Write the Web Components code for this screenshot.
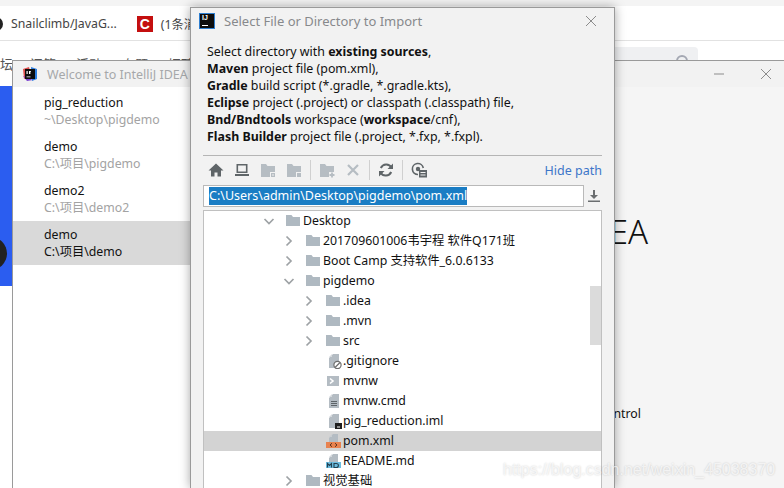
<!DOCTYPE html>
<html>
<head>
<meta charset="utf-8">
<title>Select File or Directory to Import</title>
<style>
  html, body { margin: 0; height: 100%; overflow: hidden; background: #fff; }
  body { font-family: "Noto Sans", "Noto Sans CJK SC", sans-serif; }
</style>
</head>
<body>
<ij-desktop>
  <browser-back slot="back"></browser-back>
  <welcome-window slot="welcome"></welcome-window>
  <import-dialog slot="front">
    <tree-row depth="0" kind="folder" open>Desktop</tree-row>
    <tree-row depth="1" kind="folder" closed>201709601006韦宇程 软件Q171班</tree-row>
    <tree-row depth="1" kind="folder" closed>Boot Camp 支持软件_6.0.6133</tree-row>
    <tree-row depth="1" kind="folder" open>pigdemo</tree-row>
    <tree-row depth="2" kind="folder" closed>.idea</tree-row>
    <tree-row depth="2" kind="folder" closed>.mvn</tree-row>
    <tree-row depth="2" kind="folder" closed>src</tree-row>
    <tree-row depth="2" kind="ignore">.gitignore</tree-row>
    <tree-row depth="2" kind="shell">mvnw</tree-row>
    <tree-row depth="2" kind="text">mvnw.cmd</tree-row>
    <tree-row depth="2" kind="iml">pig_reduction.iml</tree-row>
    <tree-row depth="2" kind="xml" selected>pom.xml</tree-row>
    <tree-row depth="2" kind="md">README.md</tree-row>
    <tree-row depth="1" kind="folder" closed>视觉基础</tree-row>
  </import-dialog>
  <span slot="mark">https://blog.csdn.net/weixin_45038370</span>
</ij-desktop>

<script>
const FONT = '"Noto Sans", "Noto Sans CJK SC", sans-serif'

const FOLDER = '<path fill="#afb9c1" d="M0 2h5.500L7 4h7v9H0z"/>'
const PAGE = '<path fill="#b4bcc3" d="M7 1h6v14H3V5z"/><path fill="#d5d9dd" d="M3 4l3-3v3z"/>'

const FILE_ICONS = {
  folder: FOLDER,
  ignore: PAGE + '<circle cx="11.5" cy="12" r="3.600" fill="#fff" stroke="#6e6e6e" stroke-width="1.200"/><path stroke="#6e6e6e" stroke-width="1.200" d="M9 14.500l5-5"/>',
  shell: '<path fill="#b4bcc3" d="M1 3h12v10H1z"/><path fill="none" stroke="#fff" stroke-width="1.600" d="M4 5.500L7 8l-3 2.500"/>',
  text: PAGE + '<path stroke="#5f6569" stroke-width="1" d="M5 8.500h6M5 10.500h6M5 12.500h6"/>',
  iml: PAGE + '<path fill="#1f1f1f" d="M9 10h7v6H9z"/><path fill="#fff" d="M11 13.500h3v1h-3z"/>',
  xml: '<path fill="#b4bcc3" d="M7 1h5v8H3V5z"/><path fill="#c9ced2" d="M3 4l3-3v3z"/><path fill="#e8824f" d="M0 9h15v6H0z"/><path fill="none" stroke="#5a3520" stroke-width="1" d="M6 10.200L4 12l2 1.800M9 10.200l2 1.800-2 1.800"/>',
  md: '<path fill="#b4bcc3" d="M7 1h5v8H3V5z"/><path fill="#d5d9dd" d="M3 4l3-3v3z"/><path fill="#6cbde0" d="M0 9h15v6H0z"/><path fill="none" stroke="#24404f" stroke-width="1.100" d="M1.500 14.500v-4l2 2 2-2v4M8 10.500v4h2.200q2.200 0 2.200-2t-2.200-2z"/>'
}

/* one line of the file chooser tree */
class TreeRow extends HTMLElement {
  constructor () {
    super()
    const root = this.attachShadow({ mode: 'open' })
    const depth = Number(this.getAttribute('depth') || 0)
    const kind = this.getAttribute('kind') || 'text'
    let arrow = ''
    if (this.hasAttribute('open')) arrow = '<path d="M1.500 4l4.500 4.500L10.500 4"/>'
    if (this.hasAttribute('closed')) arrow = '<path d="M3.500 1.500L8 6l-4.500 4.500"/>'
    root.innerHTML = `
      <style>
        :host {
          display: flex;
          align-items: center;
          box-sizing: border-box;
          height: 20px;
          padding: 0 0 0 ${59 + depth * 20}px;
          white-space: nowrap;
          font-size: 12.3px;
          color: #111;
        }
        :host([selected]) { background: #d3d3d3; }
        .arrow { width: 12px; height: 12px; margin-right: 11px; flex: none; }
        .arrow path { fill: none; stroke: #9ea2a5; stroke-width: 1.7; }
        .icon { width: 16px; height: 16px; margin-right: 1px; flex: none; }
        .txt { position: relative; top: -1px; }
      </style>
      <svg class="arrow" viewBox="0 0 12 12">${arrow}</svg>
      <svg class="icon" viewBox="0 0 16 16">${FILE_ICONS[kind]}</svg>
      <span class="txt"><slot></slot></span>`
  }
}

/* icon button of the chooser toolbar */
class ToolIcon extends HTMLElement {
  constructor () {
    super()
    const root = this.attachShadow({ mode: 'open' })
    root.innerHTML = `
      <style>
        :host { display: flex; width: 26px; height: 22px; align-items: center; justify-content: center; }
        svg { width: 16px; height: 16px; }
      </style>
      <svg viewBox="0 0 16 16"></svg>`
    root.querySelector('svg').innerHTML = this.getAttribute('data-path')
  }
}

const DIALOG = document.createElement('template')
DIALOG.innerHTML = `
  <style>
    :host {
      display: flex;
      flex-direction: column;
      box-sizing: border-box;
      width: 425px;
      height: 100%;
      background: #f2f2f2;
      border: 1px solid #9a9a9a;
      border-bottom: 0;
      box-shadow: 0 0 10px rgba(0, 0, 0, .35);
      font-size: 12.4px;
      color: #111;
    }
    .title {
      display: flex;
      align-items: center;
      height: 25px;
      flex: none;
      padding: 0 17px 0 8px;
      color: #87898c;
      font-size: 13px;
    }
    .logo {
      display: flex;
      width: 16px;
      height: 16px;
      margin-right: 9px;
      background: #0d0d0d;
      box-shadow: 0 0 0 1px #2f7fd0 inset;
      color: #fff;
      font: bold 7px/9px "Liberation Sans", sans-serif;
      padding-left: 3px;
      box-sizing: border-box;
      position: relative;
    }
    .logo::after {
      content: "";
      position: absolute;
      left: 3px;
      bottom: 3px;
      width: 6px;
      height: 1px;
      background: #fff;
    }
    .title span.txt { flex: 1; }
    .desc { margin: 10px 0 0; padding: 0 12px 0 16px; line-height: 17px; flex: none; }
    .desc div { white-space: nowrap; }
    .rule { height: 1px; background: #b5b5b5; margin: 10px 12px 0 12px; flex: none; }
    .tools { display: flex; align-items: center; height: 28px; margin: 0 12px; flex: none; }
    .sep { width: 1px; height: 20px; margin: 0 3px; background: #d0d0d0; flex: none; }
    .spring { flex: 1; }
    a { color: #3d76c9; font-size: 12.5px; text-decoration: none; }
    .pathline { display: flex; align-items: center; height: 22px; margin: 1px 12px 0 12px; flex: none; }
    .field {
      flex: 1;
      box-sizing: border-box;
      height: 22px;
      padding: 1px 0 0 5px;
      background: #fff;
      border: 1px solid #b9b9b9;
      white-space: nowrap;
      line-height: 18px;
      font-size: 12.5px;
    }
    .field span { background: #1a7dc4; color: #fff; display: inline-block; height: 18px; }
    .dl { width: 16px; height: 16px; margin-left: 2px; flex: none; }
    .tree {
      position: relative;
      flex: 1;
      margin: 3px 12px 0 12px;
      background: #fff;
      border: 1px solid #c0c0c0;
      border-bottom: 0;
      overflow: hidden;
    }
    .thumb {
      position: absolute;
      right: 0;
      top: 75px;
      width: 11px;
      height: 59px;
      background: #dbdbdb;
    }
  </style>
  <div class="title">
    <span class="logo">IJ</span><span class="txt">Select File or Directory to Import</span>
    <svg width="12" height="12" viewBox="0 0 12 12"><path d="M1 1l10 10M11 1L1 11" stroke="#8c8c8c" fill="none"/></svg>
  </div>
  <div class="desc">
    <div>Select directory with <b>existing sources</b>,</div>
    <div><b>Maven</b> project file (pom.xml),</div>
    <div><b>Gradle</b> build script (*.gradle, *.gradle.kts),</div>
    <div><b>Eclipse</b> project (.project) or classpath (.classpath) file,</div>
    <div><b>Bnd/Bndtools</b> workspace (<b>workspace</b>/cnf),</div>
    <div><b>Flash Builder</b> project file (.project, *.fxp, *.fxpl).</div>
  </div>
  <div class="rule"></div>
  <div class="tools">
    <tool-icon data-path='<path fill="#5f6568" d="M8 1.500L15.500 8.500H13v6H9.500v-4h-3v4H3v-6H.500z"/>'></tool-icon>
    <tool-icon data-path='<path fill="none" stroke="#5f6568" stroke-width="1.600" d="M3.300 2.800h9.400v7.400H3.300z"/><path fill="#5f6568" d="M1 12h14v2H1z"/>'></tool-icon>
    <tool-icon data-path='<path fill="#b6bdc3" d="M1 2h5l1.500 2H15v6H10v5H1z"/><path fill="#b6bdc3" d="M11 11h4v4h-4z"/><path fill="#f2f2f2" d="M12 12.500h2v1h-2z"/>'></tool-icon>
    <tool-icon data-path='<path fill="#b6bdc3" d="M1 2h5l1.500 2H15v6H10v5H1z"/><path fill="#b6bdc3" d="M11 11h4v4h-4z"/>'></tool-icon>
    <span class="sep"></span>
    <tool-icon data-path='<path fill="#b6bdc3" d="M1 2h5l1.500 2H15v6h-5v5H1z"/><path stroke="#b6bdc3" stroke-width="1.800" d="M13 10.500v5M10.500 13h5"/>'></tool-icon>
    <tool-icon data-path='<path stroke="#b6bdc3" stroke-width="2.200" d="M3 3l10 10M13 3L3 13"/>'></tool-icon>
    <span class="sep"></span>
    <tool-icon data-path='<path fill="none" stroke="#5f6568" stroke-width="2" d="M13.500 5.500A6 6 0 0 0 2.800 6M2.500 10.500A6 6 0 0 0 13.200 10"/><path fill="#5f6568" d="M15 1.500V7h-5.500zM1 14.500V9h5.500z"/>'></tool-icon>
    <span class="sep"></span>
    <tool-icon data-path='<path fill="none" stroke="#5f6568" stroke-width="1.600" d="M7 12.500A5.500 5.500 0 1 1 12.300 6"/><circle cx="7" cy="7" r="2.200" fill="#5f6568"/><path fill="#5f6568" d="M8 8h8v7.500H8z"/><path stroke="#f2f2f2" d="M9.500 10.500h5M9.500 13h5"/>'></tool-icon>
    <span class="spring"></span>
    <a href="#">Hide path</a>
  </div>
  <div class="pathline">
    <div class="field"><span>C:\\Users\\admin\\Desktop\\pigdemo\\pom.xml</span></div>
    <svg class="dl" viewBox="0 0 16 16"><path fill="#6b6e70" d="M7 2h2v5h3L8 11 4 7h3zM2 12.500h12V14H2z"/></svg>
  </div>
  <div class="tree"><slot></slot><div class="thumb"></div></div>
`

class ImportDialog extends HTMLElement {
  constructor () {
    super()
    this.attachShadow({ mode: 'open' }).appendChild(DIALOG.content.cloneNode(true))
  }
}

/* one recent project on the welcome screen */
class RecentItem extends HTMLElement {
  constructor () {
    super()
    const root = this.attachShadow({ mode: 'open' })
    root.innerHTML = `
      <style>
        :host {
          display: block;
          height: 44px;
          box-sizing: border-box;
          padding: 5px 0 0 31px;
          font-size: 12.3px;
          line-height: 17px;
          color: #111;
          white-space: nowrap;
        }
        :host([active]) { background: #d9d9d9; }
        .path { color: #a3a3a3; }
        :host([active]) .path { color: #111; }
      </style>
      <div>${this.getAttribute('name')}</div>
      <div class="path">${this.getAttribute('path')}</div>`
  }
}

const WELCOME = document.createElement('template')
WELCOME.innerHTML = `
  <style>
    :host {
      display: flex;
      flex-direction: column;
      box-sizing: border-box;
      width: 772px;
      height: 100%;
      background: #f5f5f5;
      border: 1px solid #9a9a9a;
      border-right: 0;
      border-bottom: 0;
      font-family: ${FONT};
    }
    .bar {
      display: flex;
      align-items: center;
      flex: none;
      height: 26px;
      background: #f2f2f2;
      padding-left: 9px;
      font-size: 12.5px;
      color: #a6a8aa;
      white-space: nowrap;
    }
    .bar svg.mark { margin-right: 9px; }
    .spring { flex: 1; }
    .ctl { margin-right: 12px; }
    .ctl.min { margin-right: 35px; }
    .body { display: flex; flex: 1; min-height: 0; }
    .list { width: 177px; background: #fff; flex: none; padding-top: 2px; }
    .right { flex: 1; padding: 125px 0 0 0; font-size: 12.3px; color: #111; white-space: nowrap; text-align: right; overflow: hidden; }
    .big { font-size: 33px; line-height: 40px; font-weight: 300; margin-right: 136px; }
    .act { margin-top: 153px; margin-right: 143px; }
  </style>
  <div class="bar">
    <svg class="mark" width="16" height="16" viewBox="0 0 16 16">
      <path fill="#e2504f" d="M1 3l6-2 2 8-7 4z"/>
      <path fill="#7a3fd0" d="M1 10l4 5 6-1z"/>
      <path fill="#2f7fe0" d="M9 1l6 2v10l-5 2z"/>
      <path fill="#0d0d0d" d="M3 3h10v10H3z"/>
      <path fill="#fff" d="M4.500 5h1.200v3H4.500zM7 5h2v.8H8.400V8H7zM4.500 10.500h4v.8h-4z"/>
    </svg>
    Welcome to IntelliJ IDEA
    <span class="spring"></span>
    <svg class="ctl min" width="12" height="12" viewBox="0 0 12 12"><path d="M1 6h10" stroke="#8c8c8c"/></svg>
    <svg class="ctl" width="12" height="12" viewBox="0 0 12 12"><path d="M1 1l10 10M11 1L1 11" stroke="#8c8c8c"/></svg>
  </div>
  <div class="body">
    <div class="list">
      <recent-item name="pig_reduction" path="~\\Desktop\\pigdemo"></recent-item>
      <recent-item name="demo" path="C:\\项目\\pigdemo"></recent-item>
      <recent-item name="demo2" path="C:\\项目\\demo2"></recent-item>
      <recent-item name="demo" path="C:\\项目\\demo" active></recent-item>
    </div>
    <div class="right">
      <div class="big">IntelliJ IDEA</div>
      <div class="act">Check out from Version Control</div>
    </div>
  </div>
`

class WelcomeWindow extends HTMLElement {
  constructor () {
    super()
    this.attachShadow({ mode: 'open' }).appendChild(WELCOME.content.cloneNode(true))
  }
}

/* the browser page that shows behind both IDE windows */
class BrowserBack extends HTMLElement {
  constructor () {
    super()
    const root = this.attachShadow({ mode: 'open' })
    root.innerHTML = `
      <style>
        :host { display: block; height: 100%; background: #fff; overflow: hidden; font-family: ${FONT}; }
        .top { height: 6px; background: #f4f4f4; }
        .tabs {
          display: flex;
          align-items: center;
          height: 34px;
          box-sizing: border-box;
          border-bottom: 1px solid #e2e2e2;
          font-size: 12.3px;
          color: #444;
          white-space: nowrap;
          margin-top: 1px;
        }
        .dot { width: 14px; height: 14px; margin-left: -11px; margin-right: 8px; background: #222; border-radius: 50%; }
        .c {
          display: flex; align-items: center; justify-content: center;
          width: 16px; height: 16px; margin: 0 8px 0 20px;
          background: #c40f0f; color: #fff; font: bold 14px/16px "Liberation Sans", sans-serif;
        }
        .menu { display: flex; height: 30px; padding-top: 13px; box-sizing: border-box; gap: 20px; font-size: 13px; color: #555; white-space: nowrap; }
        .menu span:first-child { margin-right: -3px; }
        .side { width: 12px; height: 200px; margin-top: 15px; background: #2b5df0; position: relative; overflow: hidden; }
        .side::after { content: ""; position: absolute; left: -26px; top: 151px; width: 33px; height: 33px; border-radius: 50%; background: #222; }
        .search { position: absolute; left: 590px; top: 47px; width: 108px; height: 30px; background: #eff0f2; border-radius: 4px; }
        .search::after { content: ""; position: absolute; right: 10px; top: 8px; width: 8px; height: 8px; border: 2px solid #a4a8b3; border-radius: 50%; }
      </style>
      <div class="top"></div>
      <div class="tabs"><span class="dot"></span>Snailclimb/JavaG...<span class="c">C</span>(1条消息)</div>
      <div class="menu"><span>坛</span><span>问答</span><span>活动</span><span>专题</span><span>招聘</span></div>
      <div class="side"></div>
      <div class="search"></div>`
  }
}

const DESKTOP = document.createElement('template')
DESKTOP.innerHTML = `
  <style>
    :host {
      display: block;
      position: relative;
      width: 784px;
      height: 488px;
      overflow: hidden;
      font-family: ${FONT};
    }
    .browser { position: absolute; inset: 0; }
    .welcome { position: absolute; left: 12px; top: 60px; right: 0; bottom: 0; }
    .dialog { position: absolute; left: 190px; top: 7px; bottom: 0; }
    .mark {
      position: absolute;
      left: 503px;
      top: 461px;
      font: 16px/18px "Liberation Sans", sans-serif;
      color: rgba(255, 255, 255, .7);
      text-shadow: 0 0 2px rgba(0, 0, 0, .2);
      white-space: nowrap;
    }
  </style>
  <div class="browser"><slot name="back"></slot></div>
  <div class="welcome"><slot name="welcome"></slot></div>
  <div class="dialog"><slot name="front"></slot></div>
  <div class="mark"><slot name="mark"></slot></div>
`

class IjDesktop extends HTMLElement {
  constructor () {
    super()
    this.attachShadow({ mode: 'open' }).appendChild(DESKTOP.content.cloneNode(true))
  }
}

customElements.define('tree-row', TreeRow)
customElements.define('tool-icon', ToolIcon)
customElements.define('recent-item', RecentItem)
customElements.define('import-dialog', ImportDialog)
customElements.define('welcome-window', WelcomeWindow)
customElements.define('browser-back', BrowserBack)
customElements.define('ij-desktop', IjDesktop)
</script>
</body>
</html>
